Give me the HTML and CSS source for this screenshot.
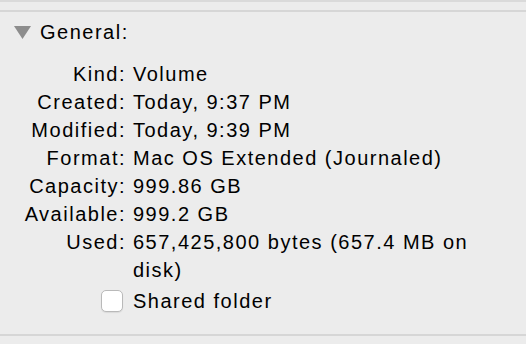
FILE: index.html
```html
<!DOCTYPE html>
<html lang="en">
<head>
    <meta charset="UTF-8">
    <title>Info</title>
    <link rel="stylesheet" href="styles.css">
</head>
<body>
    <div class="top-edge"></div>
    <div class="section">
        <div class="head">
            <svg class="disclosure" width="17" height="13" viewBox="0 0 17 13"><polygon points="0,0 17,0 8.5,13" fill="#8d8d8d"/></svg>
            General:
        </div>
        <dl class="info">
            <dt>Kind:</dt><dd>Volume</dd>
            <dt>Created:</dt><dd>Today, 9:37 PM</dd>
            <dt>Modified:</dt><dd>Today, 9:39 PM</dd>
            <dt>Format:</dt><dd>Mac OS Extended (Journaled)</dd>
            <dt>Capacity:</dt><dd>999.86 GB</dd>
            <dt>Available:</dt><dd>999.2 GB</dd>
            <dt>Used:</dt><dd>657,425,800 bytes (657.4 MB on disk)</dd>
        </dl>
        <label class="share"><span class="box"></span>Shared folder</label>
    </div>
</body>
</html>
```

FILE: styles.css
```css
* {
    margin: 0;
    padding: 0;
    box-sizing: border-box;
}
body {
    background-color: #ececec;
    color: #000;
    font-family: "Liberation Sans", Arial, sans-serif;
    font-size: 20px;
    letter-spacing: 1.5px;
    line-height: 28px;
}
.top-edge {
    height: 2px;
    background-color: #dadada;
    margin-bottom: 8px;
}
.section {
    border-top: 2px solid #d6d6d6;
    border-bottom: 2px solid #d6d6d6;
    padding: 6px 0 19px;
}
.head {
    display: flex;
    align-items: center;
    height: 28px;
    padding-left: 14px;
}
.disclosure {
    margin-right: 9px;
}
.info {
    margin-top: 14px;
    display: grid;
    grid-template-columns: 126px 345px;
    column-gap: 7px;
}
.info dt {
    text-align: right;
}
.share {
    display: flex;
    align-items: center;
    height: 28px;
    margin-top: 3px;
    padding-left: 101px;
}
.box {
    width: 22px;
    height: 22px;
    margin-right: 10px;
    background-color: #fff;
    border: 1px solid #b9b9b9;
    border-radius: 5px;
    box-shadow: 0 1px 1px rgba(0, 0, 0, 0.08);
}
```
